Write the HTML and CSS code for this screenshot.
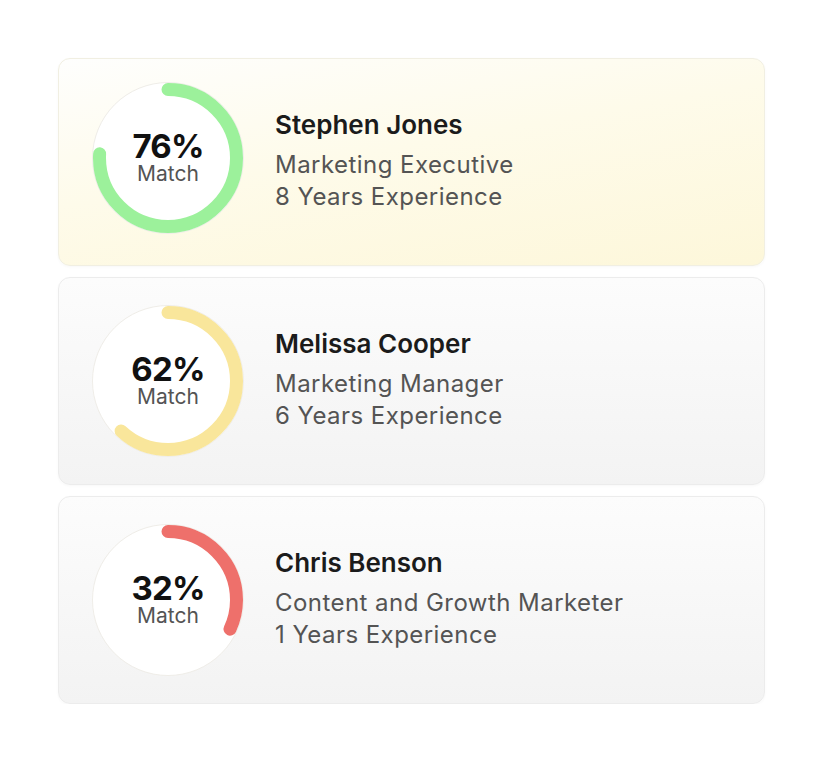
FILE: index.html
```html
<!DOCTYPE html>
<html>
  <head>
    <meta charset="utf-8" />
    <title>Candidate Match</title>
    <link rel="stylesheet" href="styles.css">
  </head>
  <body>
    <div class="list">
      <div class="card top-match">
        <div class="ring">
          <svg viewBox="0 0 152 152" width="152" height="152">
            <circle class="disc" cx="76" cy="76" r="75.5" />
            <circle class="arc green" cx="76" cy="76" r="68.5" pathLength="100" stroke-dasharray="76 100" />
          </svg>
          <div class="ring-label">
            <div class="percent">76%</div>
            <div class="match">Match</div>
          </div>
        </div>
        <div class="info">
          <div class="name">Stephen Jones</div>
          <div class="meta">Marketing Executive</div>
          <div class="meta">8 Years Experience</div>
        </div>
      </div>

      <div class="card">
        <div class="ring">
          <svg viewBox="0 0 152 152" width="152" height="152">
            <circle class="disc" cx="76" cy="76" r="75.5" />
            <circle class="arc yellow" cx="76" cy="76" r="68.5" pathLength="100" stroke-dasharray="62 100" />
          </svg>
          <div class="ring-label">
            <div class="percent">62%</div>
            <div class="match">Match</div>
          </div>
        </div>
        <div class="info">
          <div class="name">Melissa Cooper</div>
          <div class="meta">Marketing Manager</div>
          <div class="meta">6 Years Experience</div>
        </div>
      </div>

      <div class="card">
        <div class="ring">
          <svg viewBox="0 0 152 152" width="152" height="152">
            <circle class="disc" cx="76" cy="76" r="75.5" />
            <circle class="arc red" cx="76" cy="76" r="68.5" pathLength="100" stroke-dasharray="32 100" />
          </svg>
          <div class="ring-label">
            <div class="percent">32%</div>
            <div class="match">Match</div>
          </div>
        </div>
        <div class="info">
          <div class="name">Chris Benson</div>
          <div class="meta">Content and Growth Marketer</div>
          <div class="meta">1 Years Experience</div>
        </div>
      </div>
    </div>
  </body>
</html>
```

FILE: styles.css
```css
* {
  margin: 0;
  padding: 0;
  box-sizing: border-box;
}

body {
  background: #ffffff;
  font-family: Inter, "Noto Sans", sans-serif;
  color: #1b1b1b;
}

.list {
  display: flex;
  flex-direction: column;
  gap: 11px;
  width: 707px;
  margin: 58px 0 0 58px;
}

.card {
  height: 208px;
  display: flex;
  align-items: center;
  gap: 31px;
  padding: 0 30px 0 33px;
  border: 1px solid #ececec;
  border-radius: 12px;
  background: linear-gradient(180deg, #fcfcfc 0%, #f3f3f3 100%);
  box-shadow: 0 1px 3px rgba(0, 0, 0, 0.03);
}

.top-match {
  border-color: #f1efe2;
  background: linear-gradient(170deg, #fefefd 0%, #fefbea 45%, #fdf7da 100%);
}

/* ring sits a little high in the first card */
.top-match .ring {
  margin-bottom: 9px;
}

/* ring + label stacked in one grid cell */
.ring {
  display: grid;
  width: 152px;
  height: 152px;
  flex-shrink: 0;
}

.ring svg,
.ring-label {
  grid-area: 1 / 1;
}

.disc {
  fill: #ffffff;
  stroke: #efede8;
  stroke-width: 1;
}

.arc {
  fill: none;
  stroke-width: 13;
  stroke-linecap: round;
  transform: rotate(-90deg);
  transform-origin: 76px 76px;
}

.green {
  stroke: #9cf19b;
}

.yellow {
  stroke: #f9e69b;
}

.red {
  stroke: #ee706b;
}

.ring-label {
  display: flex;
  flex-direction: column;
  align-items: center;
  justify-content: center;
}

.percent {
  font-size: 33px;
  font-weight: 700;
  line-height: 32px;
  color: #111111;
  letter-spacing: -0.8px;
}

.match {
  font-size: 21px;
  line-height: 24px;
  color: #545454;
}

.info {
  display: flex;
  flex-direction: column;
  margin-top: -2px;
}

.name {
  font-size: 26px;
  font-weight: 600;
  line-height: 32px;
  color: #1b1b1b;
  margin-bottom: 8px;
}

.meta {
  font-size: 24px;
  line-height: 32px;
  color: #545454;
  letter-spacing: 0.45px;
}
```
